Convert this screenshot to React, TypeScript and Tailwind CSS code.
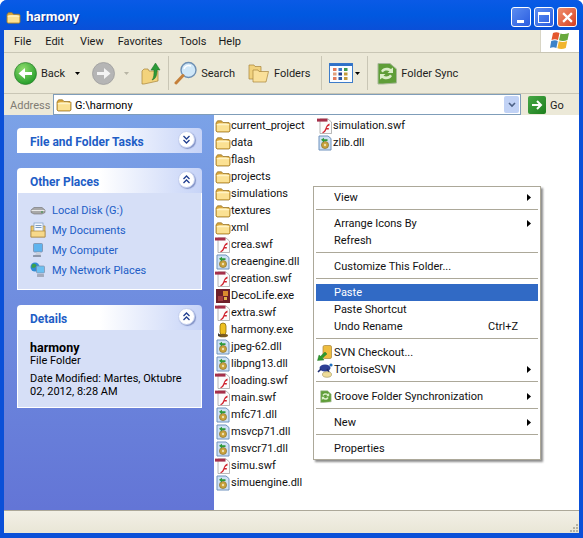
import type { ReactNode } from 'react';

const FolderIcon = ({ className = 'w-4 h-4' }: { className?: string }) => (
  <svg viewBox="0 0 16 16" className={className}>
    <path d="M1 5 L2.5 2.8 H6.5 L8 4.5 H14 L15 5.5 V13 L14 14 H2 L1 13 Z" fill="#d9a63a" stroke="#9a7a30" strokeWidth="0.8" />
    <path d="M1.8 6 C5 5.4 10 5.4 14.2 6 V13.2 H1.8 Z" fill="#fbe193" />
    <path d="M1.8 6 C5 5.4 10 5.4 14.2 6 V7.2 H1.8 Z" fill="#fff3c4" />
  </svg>
);

const SwfIcon = () => (
  <svg viewBox="0 0 16 16" className="w-4 h-4">
    <path d="M3 1 H11 L14.5 4 V15.5 H3 Z" fill="#fbfbfb" stroke="#9a9a9a" strokeWidth="0.7" />
    <path d="M0 0.6 H10.5 V3.6 H0 Z" fill="#a5304a" />
    <path d="M5.5 14 C9 13 8 7 12.5 5.5 V7.5 C10.5 8 10 9.2 9.8 10 H11.8 V11.6 H9.3 C8.6 13.6 7.5 15 5.5 15.2 Z" fill="#d0202c" />
  </svg>
);

const DllIcon = () => (
  <svg viewBox="0 0 16 16" className="w-4 h-4">
    <path d="M2 1 H11 L14 3.5 V15 H2 Z" fill="#cfe1f5" stroke="#6f92bd" strokeWidth="1" />
    <circle cx="8" cy="10" r="3.6" fill="#c9a13b" stroke="#7d6a2c" strokeWidth="0.6" />
    <circle cx="8" cy="10" r="1.2" fill="#ece0b2" />
    <path d="M4 4.8 L7 2.8 V4.2 H10.5 V6 H7 V7.4 Z" fill="#2e9a3a" />
  </svg>
);

const DecoIcon = () => (
  <svg viewBox="0 0 16 16" className="w-4 h-4">
    <rect x="1" y="1" width="14" height="14" fill="#6d1f2a" />
    <rect x="8" y="3" width="5" height="5" fill="#d98a2e" />
    <rect x="3" y="8" width="5" height="5" fill="#a13a3f" />
    <rect x="9" y="9" width="3" height="3" fill="#e2b04a" />
  </svg>
);

const HarmonyIcon = () => (
  <svg viewBox="0 0 16 16" className="w-4 h-4">
    <rect x="5" y="1" width="6" height="12" rx="3" fill="#eec020" stroke="#8a6d10" strokeWidth="0.8" />
    <ellipse cx="8" cy="13.5" rx="5" ry="1.8" fill="#7a5a20" />
    <path d="M3 11 L6 14 H3 Z" fill="#3a3a3a" />
  </svg>
);

const Chevrons = ({ up }: { up?: boolean }) => (
  <span className="flex h-[17px] w-[17px] items-center justify-center rounded-full border border-[#c4cfee] bg-white shadow-[1px_1px_1px_rgba(60,80,150,0.5)]">
    <svg viewBox="0 0 9 9" className="h-[9px] w-[9px]" fill="none" stroke="#213f8f" strokeWidth="1.3">
      {up ? <path d="M1.5 4 L4.5 1 L7.5 4 M1.5 8 L4.5 5 L7.5 8" /> : <path d="M1.5 1 L4.5 4 L7.5 1 M1.5 5 L4.5 8 L7.5 5" />}
    </svg>
  </span>
);

const Panel = ({ title, up, children }: { title: string; up?: boolean; children?: ReactNode }) => (
  <div className="w-[185px]">
    <div className="flex h-[25px] items-center justify-between rounded-t-[4px] bg-gradient-to-r from-white from-[45%] to-[#c6d3f7] pl-[13px] pr-[7px]">
      <span className="mt-[2px] text-[12px] font-bold text-[#215dc6]">{title}</span>
      <span className="-mt-[3px]"><Chevrons up={up} /></span>
    </div>
    {children && <div className="border border-t-0 border-white bg-[#d6dff7]">{children}</div>}
  </div>
);

const DiskIcon = () => (
  <svg viewBox="0 0 16 16" className="h-4 w-4">
    <path d="M1 8 L4 5.5 H12 L15 8 V10.5 L12 12 H4 L1 10.5 Z" fill="#a8a8a8" stroke="#6e6e6e" strokeWidth="0.6" />
    <path d="M1.5 8.5 H14.5" stroke="#e8e8e8" />
    <rect x="11" y="9.5" width="2" height="1" fill="#2c8c3c" />
  </svg>
);

const DocsIcon = () => (
  <svg viewBox="0 0 16 16" className="h-4 w-4">
    <path d="M1 4 H15 V15 H1 Z" fill="#efc766" stroke="#a8843a" strokeWidth="0.7" />
    <rect x="4" y="1" width="9" height="9" fill="#f4f8ff" stroke="#7d9cc0" strokeWidth="0.7" />
    <path d="M5.5 3.5 H11.5 M5.5 5.5 H11.5" stroke="#7d9cc0" />
    <rect x="1" y="9" width="14" height="6" fill="#f7d98a" stroke="#a8843a" strokeWidth="0.7" />
  </svg>
);

const ComputerIcon = () => (
  <svg viewBox="0 0 16 16" className="h-4 w-4">
    <rect x="3.5" y="1.5" width="9" height="8.5" rx="1" fill="#5fb4ef" stroke="#7f8ea8" strokeWidth="0.8" />
    <path d="M7 10 H10 L11 13 H5 Z" fill="#c9cfdb" />
    <rect x="3" y="13" width="8" height="2" rx="0.5" fill="#8d97ab" />
  </svg>
);

const NetworkIcon = () => (
  <svg viewBox="0 0 16 16" className="h-4 w-4">
    <circle cx="5" cy="5" r="4.5" fill="#2f8bd4" />
    <path d="M2 2.5 C4 1 6 2 6.5 4 C5 6 3 6 1.5 5.5 Z" fill="#3aa14a" />
    <rect x="6.5" y="4" width="8" height="7" rx="1" fill="#6cc0f2" stroke="#7f8ea8" strokeWidth="0.7" />
    <rect x="7" y="12" width="7" height="3" rx="0.5" fill="#a3abbd" />
  </svg>
);

const BackIcon = () => (
  <svg viewBox="0 0 23 23" className="h-[23px] w-[23px]">
    <defs>
      <radialGradient id="backFill" cx="40%" cy="30%" r="75%">
        <stop offset="0" stopColor="#8fdc6c" />
        <stop offset="1" stopColor="#1f9a27" />
      </radialGradient>
    </defs>
    <circle cx="11.5" cy="11.5" r="11" fill="url(#backFill)" stroke="#2c7d2c" strokeWidth="0.7" />
    <path d="M18 10 H11 V6 L4.5 11.5 L11 17 V13 H18 Z" fill="#fff" />
  </svg>
);

const ForwardIcon = () => (
  <svg viewBox="0 0 23 23" className="h-[23px] w-[23px]">
    <circle cx="11.5" cy="11.5" r="11" fill="#b5b5b5" stroke="#9a9a9a" strokeWidth="0.7" />
    <path d="M5 10 H12 V6 L18.5 11.5 L12 17 V13 H5 Z" fill="#f3f3f3" />
  </svg>
);

const UpIcon = () => (
  <svg viewBox="0 0 20 24" className="h-[24px] w-[20px]">
    <path d="M1 10 L3 8 H7 L8 10 H17 V20 L3 23 H1 Z" fill="#f3d37c" stroke="#a8843a" strokeWidth="0.7" />
    <path d="M11 19 C13 17 13 13 13 9 H10 L14.5 2 L19 9 H16 C16 14 15 18 11 19 Z" fill="#2c9a38" stroke="#1d6c27" strokeWidth="0.5" />
  </svg>
);

const SearchIcon = () => (
  <svg viewBox="0 0 24 24" className="h-6 w-6">
    <circle cx="14.5" cy="9" r="7.5" fill="#cfe7f8" stroke="#6d8fb3" strokeWidth="1.4" />
    <path d="M10 8 C11 5 14 4 17 5" stroke="#fff" strokeWidth="1.5" fill="none" />
    <path d="M9 14.5 L2 22" stroke="#c5803a" strokeWidth="3" strokeLinecap="round" />
  </svg>
);

const FoldersIcon = () => (
  <svg viewBox="0 0 22 20" className="h-5 w-[22px]">
    <path d="M1 2 H6 L7 3.5 H13 V16 H1 Z" fill="#f1d27e" stroke="#a8843a" strokeWidth="0.7" />
    <path d="M5 7 H10 L11 8.5 H20.5 L18 19 H5 Z" fill="#fae09a" stroke="#a8843a" strokeWidth="0.7" />
  </svg>
);

const ViewsIcon = () => (
  <svg viewBox="0 0 24 20" className="h-5 w-6">
    <rect x="0.5" y="0.5" width="23" height="19" fill="#fbfdff" stroke="#3d7cc9" />
    <rect x="0.5" y="0.5" width="23" height="2.5" fill="#2f71c8" />
    {[4, 9.5, 15].map((x, i) =>
      [5, 9.5, 14].map((y, j) => (
        <rect key={`${i}-${j}`} x={x} y={y} width="3.5" height="3" fill={[['#e2795a', '#e2a07a', '#e2795a'], ['#3c78c8', '#1f3f8f', '#2a5aa8'], ['#3a9a50', '#c49a3a', '#c49a3a']][i][j]} />
      )),
    )}
  </svg>
);

const SyncIcon = ({ className = 'h-[23px] w-[23px]' }: { className?: string }) => (
  <svg viewBox="0 0 23 23" className={className}>
    <path d="M3 1.5 H15 L21.5 7 V21 L8 22 H3 Z" fill="#5f9e38" stroke="#a9b99a" strokeWidth="1" />
    <path d="M6 9 C8 5 13 5 16 7 L18 5.5 V11 H12.5 L14.5 9.2 C12 8 9 8.5 8 10.5 Z" fill="#dbeec9" />
    <path d="M17 14 C15 18 10 18 7 16 L5 17.5 V12 H10.5 L8.5 13.8 C11 15 14 14.5 15 12.5 Z" fill="#dbeec9" />
  </svg>
);

const WinLogo = () => (
  <svg viewBox="0 0 22 20" className="h-[20px] w-[22px]">
    <path d="M4 2 C6.5 0.8 8.5 1 10.5 2 L9 9 C7 8 5 8 2.5 9 Z" fill="#e4572e" />
    <path d="M11.5 2.4 C14 3.4 17 3.4 20 2 L18.5 9 C15.5 10.2 12.5 10.2 10 9.2 Z" fill="#68a93c" />
    <path d="M2.2 10 C5 9 7 9 8.8 10 L7.4 17 C5.4 16 3 16 1 17 Z" fill="#3d83c9" />
    <path d="M9.8 10.2 C12.4 11.2 15.4 11.2 18.2 10 L16.8 17 C14 18.2 11 18.2 8.4 17.2 Z" fill="#f1b52e" />
  </svg>
);

const SvnCheckoutIcon = () => (
  <svg viewBox="0 0 16 16" className="h-4 w-4">
    <rect x="6" y="0.5" width="8.5" height="13" rx="1.5" fill="#eebd3f" stroke="#a8843a" strokeWidth="0.7" />
    <path d="M0.5 15.5 L2 10 L3.5 11.2 L8 7 L10 9 L5.5 13 L7 15 Z" fill="#2e9a2e" stroke="#1e6e1e" strokeWidth="0.4" />
  </svg>
);

const TortoiseIcon = () => (
  <svg viewBox="0 0 16 16" className="h-4 w-4">
    <ellipse cx="8" cy="6" rx="5.5" ry="3.5" fill="#2d3f94" />
    <circle cx="14" cy="3" r="1.6" fill="#1f6fc0" />
    <path d="M1 10 L4 7 M12 10 L10 7" stroke="#1e2d70" strokeWidth="1.6" />
    <ellipse cx="10" cy="12.5" rx="4.5" ry="2.8" fill="#eedc9a" stroke="#8a7a3a" strokeWidth="0.5" />
  </svg>
);

const Separator = ({ tall }: { tall?: boolean }) => (
  <div className={`flex-none pt-[3px] ${tall ? 'h-[10px]' : 'h-[9px]'}`}><div className="h-px bg-[#aca899]" /></div>
);

const Caret = () => (
  <svg viewBox="0 0 4 7" className="h-[7px] w-1 flex-none" fill="#000"><path d="M0 0 L4 3.5 L0 7 Z" /></svg>
);

const MenuItem = ({ label, arrow, shortcut, icon, active }: { label: string; arrow?: boolean; shortcut?: string; icon?: ReactNode; active?: boolean }) => (
  <div className={`flex h-[17px] items-center ${active ? 'bg-[#316ac5] text-white' : 'text-[#111]'}`}>
    <span className="flex w-[18px] flex-none items-center justify-center">{icon}</span>
    <span className="flex-1">{label}</span>
    {shortcut && <span className="mr-[20px]">{shortcut}</span>}
    {arrow && <span className="mr-[7px]"><Caret /></span>}
  </div>
);

const files: [string, ReactNode][] = [
  ['current_project', <FolderIcon />],
  ['data', <FolderIcon />],
  ['flash', <FolderIcon />],
  ['projects', <FolderIcon />],
  ['simulations', <FolderIcon />],
  ['textures', <FolderIcon />],
  ['xml', <FolderIcon />],
  ['crea.swf', <SwfIcon />],
  ['creaengine.dll', <DllIcon />],
  ['creation.swf', <SwfIcon />],
  ['DecoLife.exe', <DecoIcon />],
  ['extra.swf', <SwfIcon />],
  ['harmony.exe', <HarmonyIcon />],
  ['jpeg-62.dll', <DllIcon />],
  ['libpng13.dll', <DllIcon />],
  ['loading.swf', <SwfIcon />],
  ['main.swf', <SwfIcon />],
  ['mfc71.dll', <DllIcon />],
  ['msvcp71.dll', <DllIcon />],
  ['msvcr71.dll', <DllIcon />],
  ['simu.swf', <SwfIcon />],
  ['simuengine.dll', <DllIcon />],
  ['simulation.swf', <SwfIcon />],
  ['zlib.dll', <DllIcon />],
];

const ToolText = ({ children, className = '' }: { children: ReactNode; className?: string }) => (
  <span className={`text-[#1d1d1d] ${className}`}>{children}</span>
);

const DownTri = ({ color = '#000' }: { color?: string }) => (
  <svg viewBox="0 0 5 3" className="h-[3px] w-[5px]" fill={color}><path d="M0 0 H5 L2.5 3 Z" /></svg>
);

const VSep = () => <div className="h-[34px] w-px bg-[#c9c6b5]" />;

export default function App() {
  return (
    <div className="relative flex h-[538px] w-[583px] flex-col overflow-hidden rounded-t-[7px] bg-[#0a50d8] font-['Roboto',sans-serif] text-[11px] leading-none text-black">
      {/* title bar */}
      <div className="flex h-[30px] flex-none items-center bg-gradient-to-b from-[#0a5ae6] via-[#0058e0] to-[#0a4fd8] pl-[6px] pr-[6px] pt-[4px]">
        <FolderIcon className="h-[15px] w-[15px]" />
        <span className="ml-[5px] text-[13.5px] font-bold text-white [text-shadow:1px_1px_0_#0a2f90]">harmony</span>
        <div className="ml-auto flex gap-[3px] text-white">
          <div className="flex h-[20px] w-[20px] items-end rounded-[3px] border border-white bg-gradient-to-br from-[#5c8cf0] to-[#2a5ce0] pb-[3px] pl-[5px]">
            <div className="h-[3px] w-[7px] bg-white" />
          </div>
          <div className="flex h-[20px] w-[20px] items-center justify-center rounded-[3px] border border-white bg-gradient-to-br from-[#5c8cf0] to-[#2a5ce0]">
            <div className="h-[11px] w-[12px] border border-t-[3px] border-white" />
          </div>
          <div className="flex h-[20px] w-[20px] items-center justify-center rounded-[3px] border border-white bg-gradient-to-br from-[#ee8f6e] to-[#d83c1c]">
            <svg viewBox="0 0 10 10" className="h-[11px] w-[11px]" stroke="#fff" strokeWidth="2"><path d="M1 1 L9 9 M9 1 L1 9" /></svg>
          </div>
        </div>
      </div>

      {/* window body */}
      <div className="mx-[4px] mb-[5px] flex min-h-0 flex-1 flex-col bg-[#ece9d8]">
        {/* menu */}
        <div className="flex h-[23px] flex-none border-b border-[#c9c6b5]">
          <div className="flex flex-1 items-center text-[#1a1a1a]">
            <span className="ml-[10px]">File</span>
            <span className="ml-[14px]">Edit</span>
            <span className="ml-[16px]">View</span>
            <span className="ml-[14px]">Favorites</span>
            <span className="ml-[17px]">Tools</span>
            <span className="ml-[12px]">Help</span>
          </div>
          <div className="flex w-[39px] items-center justify-center border-l border-[#d8d5c5] bg-white"><WinLogo /></div>
        </div>

        {/* toolbar */}
        <div className="flex h-[41px] flex-none items-center border-b border-[#c9c6b5] pl-[10px]">
          <BackIcon />
          <ToolText className="ml-[4px]">Back</ToolText>
          <span className="ml-[10px]"><DownTri /></span>
          <span className="ml-[12px]"><ForwardIcon /></span>
          <span className="ml-[9px]"><DownTri color="#b8b5a5" /></span>
          <span className="ml-[12px]"><UpIcon /></span>
          <span className="ml-[7px]"><VSep /></span>
          <span className="ml-[5px]"><SearchIcon /></span>
          <ToolText className="ml-[3px]">Search</ToolText>
          <span className="ml-[13px]"><FoldersIcon /></span>
          <ToolText className="ml-[4px]">Folders</ToolText>
          <span className="ml-[11px]"><VSep /></span>
          <span className="ml-[7px]"><ViewsIcon /></span>
          <span className="ml-[2px]"><DownTri /></span>
          <span className="ml-[7px]"><VSep /></span>
          <span className="ml-[7px]"><SyncIcon /></span>
          <ToolText className="ml-[3px]">Folder Sync</ToolText>
        </div>

        {/* address */}
        <div className="flex h-[21px] flex-none items-center">
          <span className="ml-[6px] mt-[1px] w-[43px] text-[#7f7c73]">Address</span>
          <div className="flex h-[21px] w-[468px] items-center border border-[#7f9db9] bg-white pl-[2px]">
            <FolderIcon />
            <span className="ml-[3px] mt-[1px] flex-1">G:\harmony</span>
            <div className="mr-[1px] flex h-[17px] w-[15px] items-center justify-center rounded-[2px] bg-[#c1d2f5]">
              <svg viewBox="0 0 8 6" className="h-[6px] w-2" fill="none" stroke="#4d6185" strokeWidth="1.6"><path d="M1 1 L4 4 L7 1" /></svg>
            </div>
          </div>
          <div className="ml-[7px] flex h-[18px] w-[18px] items-center justify-center rounded-[2px] bg-gradient-to-br from-[#46a846] to-[#1c7f1c]">
            <svg viewBox="0 0 12 12" className="h-3 w-3" fill="none" stroke="#fff" strokeWidth="2"><path d="M1 6 H10 M6 2 L10 6 L6 10" /></svg>
          </div>
          <span className="ml-[4px] mt-[1px] text-[#1d1d1d]">Go</span>
        </div>

        {/* content */}
        <div className="flex min-h-0 flex-1">
          <div className="flex w-[210px] flex-none flex-col gap-[15px] bg-gradient-to-b from-[#7ba2e7] to-[#6375d6] pl-[13px] pt-[13px]">
            <Panel title="File and Folder Tasks" />
            <Panel title="Other Places" up>
              <div className="flex h-[96px] flex-col gap-[4px] pl-[12px] pt-[9px] text-[#215dc6]">
                {[
                  ['Local Disk (G:)', <DiskIcon />],
                  ['My Documents', <DocsIcon />],
                  ['My Computer', <ComputerIcon />],
                  ['My Network Places', <NetworkIcon />],
                ].map(([label, icon]) => (
                  <div key={label as string} className="flex h-[16px] items-center gap-[6px]">
                    {icon}
                    <span>{label}</span>
                  </div>
                ))}
              </div>
            </Panel>
            <Panel title="Details" up>
              <div className="h-[77px] pl-[12px] pt-[11px] leading-[13px]">
                <div className="text-[12.5px] font-bold">harmony</div>
                <div>File Folder</div>
                <div className="mt-[5px] w-[165px]">Date Modified: Martes, Oktubre 02, 2012, 8:28 AM</div>
              </div>
            </Panel>
          </div>
          <div className="relative flex-1 bg-white">
            <div className="grid h-full grid-flow-col grid-cols-[102px_1fr] grid-rows-[repeat(22,17px)] pl-[1px] pt-[2px]">
              {files.map(([name, icon]) => (
                <div key={name} className="flex h-[17px] items-center">
                  {icon}
                  <span className="text-[#111]">{name}</span>
                </div>
              ))}
            </div>

            {/* context menu */}
            <div className="absolute left-[99px] top-[71px] flex w-[228px] flex-col border border-[#aca899] bg-white p-[2px] shadow-[2px_2px_2px_rgba(0,0,0,0.45)]">
              <MenuItem label="View" arrow />
              <Separator />
              <MenuItem label="Arrange Icons By" arrow />
              <MenuItem label="Refresh" />
              <Separator />
              <MenuItem label="Customize This Folder..." />
              <Separator />
              <MenuItem label="Paste" active />
              <MenuItem label="Paste Shortcut" />
              <MenuItem label="Undo Rename" shortcut="Ctrl+Z" />
              <Separator />
              <MenuItem label="SVN Checkout..." icon={<SvnCheckoutIcon />} />
              <MenuItem label="TortoiseSVN" arrow icon={<TortoiseIcon />} />
              <Separator tall />
              <MenuItem label="Groove Folder Synchronization" arrow icon={<SyncIcon className="h-[13px] w-[13px]" />} />
              <Separator />
              <MenuItem label="New" arrow />
              <Separator />
              <MenuItem label="Properties" />
            </div>
          </div>
        </div>

        {/* status bar */}
        <div className="relative h-[23px] flex-none border-t border-[#aca899] bg-gradient-to-b from-[#f2f0e6] to-[#e9e6d6]">
          <div className="absolute bottom-[1px] right-[1px] grid grid-cols-3 gap-[1px]">
            {[0, 0, 1, 0, 1, 1, 1, 1, 1].map((on, i) => (
              <div key={i} className={`h-[2px] w-[2px] ${on ? 'bg-[#b5b2a2]' : ''}`} />
            ))}
          </div>
        </div>
      </div>
    </div>
  );
}
